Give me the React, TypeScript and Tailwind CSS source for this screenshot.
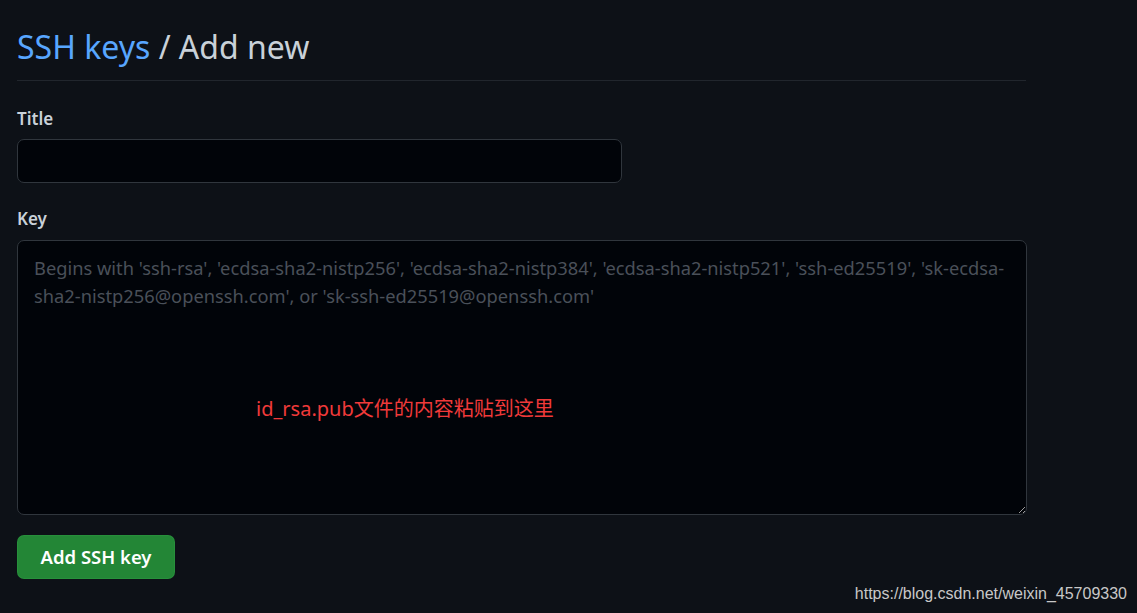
import React from 'react';

const placeholder =
  "Begins with 'ssh-rsa', 'ecdsa-sha2-nistp256', 'ecdsa-sha2-nistp384', 'ecdsa-sha2-nistp521', 'ssh-ed25519', 'sk-ecdsa-\nsha2-nistp256@openssh.com', or 'sk-ssh-ed25519@openssh.com'";

const App: React.FC = () => {
  return (
    <div
      className="min-h-screen w-full bg-[#0d1117] text-[#c9d1d9] relative"
      style={{ fontFamily: '"Noto Sans", "Noto Sans CJK SC", sans-serif' }}
    >
      <div className="w-[1009px] ml-[17px] pt-[24px]">
        <div className="border-b border-[#21262d] pb-[10px]">
          <h2 className="text-[32px] leading-[46px] font-normal">
            <span className="text-[#58a6ff]">SSH keys</span>
            <span className="text-[#c9d1d9]"> / Add new</span>
          </h2>
        </div>

        <form className="mt-[26px]">
          <label className="block text-[17px] font-semibold leading-[24px] text-[#c9d1d9]">Title</label>
          <input
            type="text"
            className="mt-[8px] block w-[605px] h-[44px] rounded-[7px] border border-[#30363d] bg-[#010409] px-[15px] text-[17px] outline-none"
          />

          <label className="block mt-[24px] text-[17px] font-semibold leading-[24px] text-[#c9d1d9]">Key</label>
          <div className="relative mt-[9px]">
            <textarea
              placeholder={placeholder}
              className="block w-[1010px] h-[275px] rounded-[7px] border border-[#30363d] bg-[#010409] px-[16px] py-[13px] text-[18.3px] leading-[28px] text-[#c9d1d9] placeholder:text-[#4a5059] outline-none"
            />
            <span className="absolute left-[239px] top-[155px] text-[20px] leading-[28px] text-[#f03a3a] pointer-events-none">
              id_rsa.pub文件的内容粘贴到这里
            </span>
          </div>

          <button
            type="button"
            className="mt-[20px] h-[44px] w-[158px] rounded-[7px] bg-[#238636] border border-[#2ea043]/40 text-white text-[18.5px] font-semibold"
          >
            Add SSH key
          </button>
        </form>
      </div>

      <div
        className="absolute right-[10px] top-[583px] text-[16px] leading-[22px] text-[#c8c8c8]"
        style={{ fontFamily: '"Liberation Sans", Arial, sans-serif' }}
      >
        https://blog.csdn.net/weixin_45709330
      </div>
    </div>
  );
};

export default App;
